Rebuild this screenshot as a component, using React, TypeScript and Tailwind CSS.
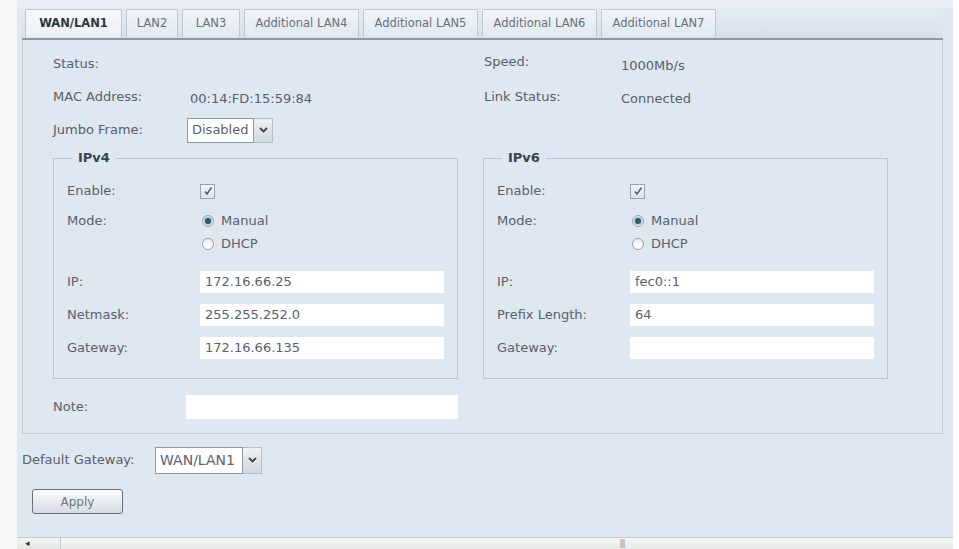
import React from "react";

const tabs = [
  { name: "WAN/LAN1", w: "w-[97px]", active: true },
  { name: "LAN2", w: "w-[52px]" },
  { name: "LAN3", w: "w-[58px]" },
  { name: "Additional LAN4", w: "w-[115px]" },
  { name: "Additional LAN5", w: "w-[115px]" },
  { name: "Additional LAN6", w: "w-[115px]" },
  { name: "Additional LAN7", w: "w-[115px]" },
];

function Chevron() {
  return (
    <svg width="9" height="6" viewBox="0 0 9 6">
      <path d="M1 1 L4.5 4.5 L8 1" fill="none" stroke="#3b4652" strokeWidth="1.8" />
    </svg>
  );
}

function Select({ value, w }: { value: string; w: string }) {
  return (
    <div className="flex h-full">
      <div className={`${w} h-full bg-white border border-[#8e99a5] flex items-center pl-[4px] text-[#5b636e]`}>{value}</div>
      <div className="w-[19px] h-full border border-l-0 border-[#b5bec8] bg-gradient-to-b from-[#eef1f4] to-[#d3d9e0] flex items-center justify-center">
        <Chevron />
      </div>
    </div>
  );
}

function Checkbox() {
  return (
    <div className="w-[15px] h-[15px] border border-[#98a3ae] bg-gradient-to-b from-[#f3f5f7] to-[#dfe4ea] flex items-center justify-center">
      <svg width="10" height="10" viewBox="0 0 10 10">
        <path d="M2 5.5 L4 8 L8.5 1.5" fill="none" stroke="#4a5563" strokeWidth="1.4" />
      </svg>
    </div>
  );
}

function Radio({ on }: { on?: boolean }) {
  return (
    <div className="w-[12px] h-[12px] rounded-full border border-[#96a1ad] bg-gradient-to-b from-[#e9edf1] to-white flex items-center justify-center">
      {on && <div className="w-[6px] h-[6px] rounded-full bg-[#2e5a70] shadow-[0_0_2px_1px_#8fb6c9]" />}
    </div>
  );
}

function Input({ value }: { value?: string }) {
  return (
    <div className="flex-1 h-[22px] bg-white flex items-center pl-[5px] text-[#59616c]">{value}</div>
  );
}

function IpBlock({ title, rows }: { title: string; rows: [string, string][] }) {
  return (
    <fieldset className="w-[405px] border border-[#bcc6d1] px-[13px] pb-[19px]">
      <legend className="ml-[5px] px-[6px] font-bold text-[#3a4450] leading-[16px]">{title}</legend>
      <div className="flex items-center h-[24px] mt-[13px]">
        <div className="w-[133px]">Enable:</div>
        <Checkbox />
      </div>
      <div className="flex mt-[6px]">
        <div className="w-[133px] h-[24px] flex items-center">Mode:</div>
        <div className="flex flex-col">
          <div className="h-[24px] flex items-center gap-[7px] pl-[2px]">
            <Radio on />
            <span>Manual</span>
          </div>
          <div className="h-[22px] flex items-center gap-[7px] pl-[2px]">
            <Radio />
            <span>DHCP</span>
          </div>
        </div>
      </div>
      <div className="flex flex-col gap-[11px] mt-[16px]">
        {rows.map(([label, value]) => (
          <div key={label} className="flex items-center">
            <div className="w-[133px]">{label}</div>
            <Input value={value} />
          </div>
        ))}
      </div>
    </fieldset>
  );
}

export default function App() {
  return (
    <div className="w-[959px] h-[549px] bg-white flex overflow-hidden font-['DejaVu_Sans',sans-serif] text-[13px] text-[#58606b]">
      <div className="w-[17px] shrink-0 bg-[#f4f6f8]" />
      <div className="w-[936px] shrink-0 flex flex-col bg-[#dfe7f1]">
        <div className="h-[8px] bg-[#eaeff6]" />
        <div className="flex-1 flex flex-col">
          {/* Tab strip */}
          <div className="ml-[5px] w-[921px] h-[32px] bg-gradient-to-b from-[#e4ebf3] to-[#d7e0eb] border-b-2 border-[#8c99a5] flex items-end pl-[3px] gap-[4px]">
            {tabs.map(t => (
              <div
                key={t.name}
                className={`${t.w} h-[28px] mb-[1px] border border-b-0 border-[#bcc7d3] rounded-t-[2px] flex items-center justify-center text-[11.5px] ${
                  t.active
                    ? "bg-gradient-to-b from-[#f7f9fc] to-[#eaf0f6] font-bold text-[#2b3541]"
                    : "bg-gradient-to-b from-[#f1f5f9] to-[#e1e8f0] text-[#66707c]"
                }`}
              >
                {t.name}
              </div>
            ))}
          </div>

          {/* Panel */}
          <div className="ml-[5px] w-[921px] border border-t-0 border-[#c3cdd8] pt-[7px] pl-[30px] pb-[14px]">
            <div className="flex h-[34px] items-center">
              <div className="w-[431px] flex">
                <div className="w-[134px]">Status:</div>
              </div>
              <div className="flex">
                <div className="w-[137px]">Speed:</div>
                <div className="pt-[4px]">1000Mb/s</div>
              </div>
            </div>
            <div className="flex h-[34px] items-center">
              <div className="w-[431px] flex">
                <div className="w-[137px]">MAC Address:</div>
                <div className="pt-[2px]">00:14:FD:15:59:84</div>
              </div>
              <div className="flex">
                <div className="w-[137px]">Link Status:</div>
                <div className="pt-[2px]">Connected</div>
              </div>
            </div>
            <div className="flex h-[30px] items-center">
              <div className="w-[134px]">Jumbo Frame:</div>
              <div className="h-[25px]">
                <Select value="Disabled" w="w-[67px]" />
              </div>
            </div>

            <div className="flex gap-[25px] mt-[5px]">
              <IpBlock
                title="IPv4"
                rows={[
                  ["IP:", "172.16.66.25"],
                  ["Netmask:", "255.255.252.0"],
                  ["Gateway:", "172.16.66.135"],
                ]}
              />
              <IpBlock
                title="IPv6"
                rows={[
                  ["IP:", "fec0::1"],
                  ["Prefix Length:", "64"],
                  ["Gateway:", ""],
                ]}
              />
            </div>

            <div className="flex items-center mt-[16px] w-[405px]">
              <div className="w-[133px]">Note:</div>
              <div className="flex-1 h-[24px] bg-white" />
            </div>
          </div>

          {/* Default gateway */}
          <div className="flex items-center ml-[5px] mt-[12px] h-[28px]">
            <div className="w-[133px]">Default Gateway:</div>
            <div className="h-[27px] text-[14px]">
              <Select value="WAN/LAN1" w="w-[88px]" />
            </div>
          </div>

          <div className="ml-[15px] mt-[15px]">
            <button className="w-[91px] h-[25px] rounded-[3px] border border-[#64707e] bg-gradient-to-b from-[#fbfcfd] to-[#d5dbe2] text-[12px] text-[#6d7681]">
              Apply
            </button>
          </div>
        </div>

        {/* Horizontal scrollbar */}
        <div className="h-[12px] border-t border-[#c2c8cf] bg-gradient-to-b from-[#f2f4f1] to-[#e3e6e3] flex">
          <div className="w-[43px] flex items-center pl-[8px] text-[9px] text-[#333]">◂</div>
          <div className="flex-1 border-l border-[#c2c8cf] bg-gradient-to-b from-[#f7f8f6] to-[#e6e9e6] flex justify-center pl-[230px]">
            <span className="text-[8px] leading-[11px] text-[#8a9096] tracking-[-1px]">|||</span>
          </div>
        </div>
      </div>
      <div className="flex-1 bg-white" />
    </div>
  );
}
